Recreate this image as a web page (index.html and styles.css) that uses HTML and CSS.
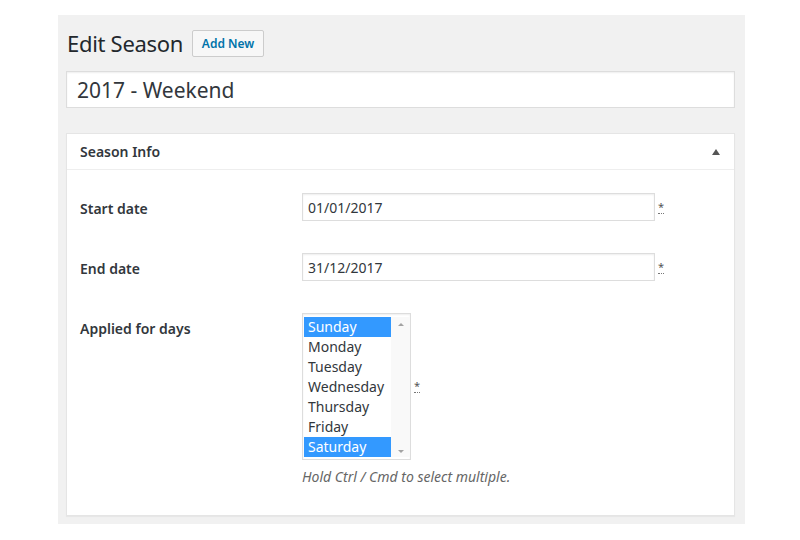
FILE: index.html
```html
<!DOCTYPE html>
<html lang="en">
<head>
    <meta charset="UTF-8">
    <title>Edit Season</title>
    <link rel="stylesheet" href="styles.css">
</head>
<body>
    <div class="wrap">
        <!-- 标题 -->
        <div class="page-title">
            <h1>Edit Season</h1>
            <a href="#" class="add-new">Add New</a>
        </div>

        <input class="title-input" type="text" value="2017 - Weekend">

        <!-- Season Info -->
        <div class="postbox">
            <div class="postbox-head">
                <span>Season Info</span>
                <span class="toggle"></span>
            </div>
            <div class="form-table">
                <label class="field-label">Start date</label>
                <div class="field">
                    <input class="text-input" type="text" value="01/01/2017">
                    <abbr class="required">*</abbr>
                </div>

                <label class="field-label">End date</label>
                <div class="field">
                    <input class="text-input" type="text" value="31/12/2017">
                    <abbr class="required">*</abbr>
                </div>

                <label class="field-label">Applied for days</label>
                <div class="field-col">
                    <div class="field field-mid">
                        <div class="day-list">
                            <ul>
                                <li class="on">Sunday</li>
                                <li>Monday</li>
                                <li>Tuesday</li>
                                <li>Wednesday</li>
                                <li>Thursday</li>
                                <li>Friday</li>
                                <li class="on">Saturday</li>
                            </ul>
                            <div class="scroll">
                                <span class="arr-up"></span>
                                <span class="arr-down"></span>
                            </div>
                        </div>
                        <abbr class="required">*</abbr>
                    </div>
                    <p class="hint">Hold Ctrl / Cmd to select multiple.</p>
                </div>
            </div>
        </div>
    </div>
</body>
</html>
```

FILE: styles.css
```css
body{
    margin: 0;
    background: #ffffff;
    font-family: "Noto Sans", "Open Sans", sans-serif;
    color: #23282d;
}
ul,li{
    margin: 0;
    padding: 0;
    list-style: none;
}
.wrap{
    width: 669px;
    margin: 15px 0 0 58px;
    padding: 13px 10px 8px 8px;
    background: #f1f1f1;
}
/* 标题 */
.page-title{
    display: flex;
    align-items: center;
    gap: 9px;
    height: 30px;
}
.page-title h1{
    margin: 0 0 0 1px;
    font-size: 22px;
    font-weight: 400;
    color: #23282d;
    letter-spacing: -0.3px;
}
.add-new{
    box-sizing: border-box;
    height: 27px;
    width: 72px;
    display: flex;
    align-items: center;
    justify-content: center;
    border: 1px solid #cccccc;
    border-radius: 2px;
    background: #f7f7f7;
    color: #0073aa;
    font-size: 12px;
    font-weight: 600;
    text-decoration: none;
}
.title-input{
    display: block;
    box-sizing: border-box;
    width: 100%;
    height: 37px;
    margin-top: 13px;
    padding: 0 10px;
    border: 1px solid #dddddd;
    background: #ffffff;
    box-shadow: inset 0 1px 2px rgba(0,0,0,.07);
    font-family: inherit;
    font-size: 21px;
    color: #32373c;
    outline: none;
}
/* postbox */
.postbox{
    margin-top: 25px;
    background: #ffffff;
    border: 1px solid #e5e5e5;
    box-shadow: 0 1px 1px rgba(0,0,0,.04);
}
.postbox-head{
    display: flex;
    align-items: center;
    justify-content: space-between;
    height: 35px;
    padding: 0 13px 0 13px;
    border-bottom: 1px solid #eeeeee;
    font-size: 14px;
    font-weight: 600;
    color: #32373c;
}
.toggle{
    width: 0;
    height: 0;
    border-left: 4px solid transparent;
    border-right: 4px solid transparent;
    border-bottom: 6px solid #555555;
    margin-right: 1px;
}
.form-table{
    display: grid;
    grid-template-columns: 222px 1fr;
    row-gap: 32px;
    padding: 23px 0 29px 13px;
}
.field-label{
    padding-top: 6px;
    font-size: 14px;
    font-weight: 600;
    line-height: 20px;
    color: #32373c;
}
.field{
    display: flex;
    align-items: center;
}
.text-input{
    box-sizing: border-box;
    width: 353px;
    height: 28px;
    padding: 0 5px;
    border: 1px solid #dddddd;
    box-shadow: inset 0 1px 2px rgba(0,0,0,.07);
    font-family: inherit;
    font-size: 14px;
    color: #32373c;
    outline: none;
}
.required{
    margin-left: 3px;
    font-size: 11px;
    line-height: 12px;
    color: #555555;
    text-decoration: none;
    border-bottom: 1px dotted #777777;
}
/* 多选列表 */
.day-list{
    box-sizing: border-box;
    width: 109px;
    height: 147px;
    display: flex;
    border: 1px solid #dddddd;
    box-shadow: inset 0 1px 2px rgba(0,0,0,.07);
    padding: 3px 0 2px 1px;
}
.day-list ul{
    width: 87px;
}
.day-list li{
    height: 20px;
    padding-left: 4px;
    font-size: 14px;
    line-height: 20px;
    color: #32373c;
}
.day-list li.on{
    background: #3399ff;
    color: #ffffff;
}
.scroll{
    flex: 1;
    display: flex;
    flex-direction: column;
    justify-content: space-between;
    align-items: center;
    padding: 6px 0 4px;
    background: #f9f9f9;
}
.arr-up,.arr-down{
    width: 0;
    height: 0;
    border-left: 3px solid transparent;
    border-right: 3px solid transparent;
}
.arr-up{
    border-bottom: 3px solid #a3a3a3;
}
.arr-down{
    border-top: 3px solid #a3a3a3;
}
.hint{
    margin: 8px 0 0;
    font-size: 14px;
    font-style: italic;
    line-height: 18px;
    color: #666666;
}
```
